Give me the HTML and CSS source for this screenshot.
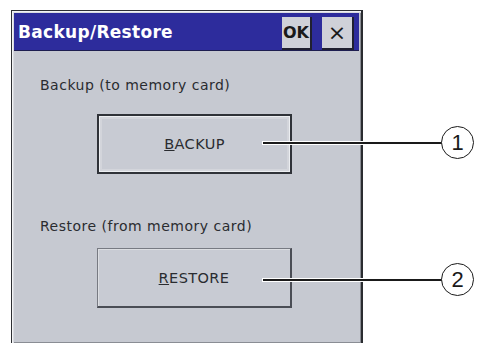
FILE: index.html
```html
<!DOCTYPE html>
<html>
<head>
<meta charset="utf-8">
<link rel="stylesheet" href="styles.css">
</head>
<body>
<div class="stage">
  <div class="window">
    <div class="titlebar">
      <span class="title">Backup/Restore</span>
      <span class="tbtn ok">OK</span>
      <span class="tbtn close">×</span>
    </div>
    <div class="content">
      <div class="label">Backup (to memory card)</div>
      <div class="btn btn-default"><span><u>B</u>ACKUP</span></div>
      <div class="label label2">Restore (from memory card)</div>
      <div class="btn btn-plain"><span><u>R</u>ESTORE</span></div>
    </div>
  </div>
  <div class="callout c1"><div class="line"></div><div class="num">1</div></div>
  <div class="callout c2"><div class="line"></div><div class="num">2</div></div>
</div>
</body>
</html>
```
FILE: styles.css
```css
html, body {
  margin: 0;
  padding: 0;
  background: #ffffff;
}
.stage {
  position: relative;
  width: 478px;
  height: 343px;
  overflow: hidden;
  background: #ffffff;
}
.window {
  margin-left: 11px;
  margin-top: 10px;
  width: 352px;
  height: 334px;
  box-sizing: border-box;
  border: 1px solid #2e3034;
  border-right: 2px solid #2a2c30;
  box-shadow: inset 1px 1px 0 #f2f3f5, inset 2px 2px 0 #d8dae0, inset -1px -1px 0 #8a8d94;
  background: #c6c9d1;
  padding: 2px 2px 0 2px;
  display: flex;
  flex-direction: column;
}
.titlebar {
  height: 38px;
  background: #2d2c9c;
  border-bottom: 1px solid #1d1d50;
  display: flex;
  align-items: center;
  padding-left: 4px;
  box-sizing: border-box;
}
.title {
  font-family: "DejaVu Sans", sans-serif;
  font-weight: bold;
  font-size: 17px;
  color: #ffffff;
  flex: 1;
  letter-spacing: 0.3px;
  padding-top: 1px;
}
.tbtn {
  display: flex;
  align-items: center;
  justify-content: center;
  height: 33px;
  background: #cfd1d8;
  color: #1a1a1a;
  font-family: "DejaVu Sans", sans-serif;
  box-sizing: border-box;
  border-bottom: 2px solid #202030;
  margin-top: 3px;
}
.ok {
  width: 30px;
  font-weight: bold;
  font-size: 16px;
  margin-right: 10px;
  border-right: 2px solid #202030;
}
.close {
  width: 32px;
  font-size: 22px;
  margin-right: 5px;
  border-right: 2px solid #202030;
}
.content {
  flex: 1;
  display: flex;
  flex-direction: column;
  padding: 25px 0 0 26px;
}
.label {
  font-family: "DejaVu Sans", sans-serif;
  font-size: 14px;
  line-height: 18px;
  color: #2a2c30;
  letter-spacing: 0.5px;
}
.label2 {
  margin-top: 43px;
}
.btn {
  margin-top: 20px;
  margin-left: 57px;
  width: 195px;
  height: 60px;
  box-sizing: border-box;
  display: flex;
  align-items: center;
  justify-content: center;
  font-family: "DejaVu Sans", sans-serif;
  font-size: 14.5px;
  color: #2a2c30;
  background: #c8cbd3;
}
.btn span {
  letter-spacing: 0.4px;
}
.btn-default {
  border: 2px solid #2f3238;
  box-shadow: inset 1px 1px 0 #eceef1, inset -1px -1px 0 #eceef1, inset 3px 3px 0 #d3d5db, inset -3px -3px 0 #d3d5db;
}
.btn-plain {
  margin-top: 13px;
  height: 60px;
  border-top: 1px solid #777a82;
  border-left: 1px solid #777a82;
  border-right: 2px solid #4a4d55;
  border-bottom: 2px solid #4a4d55;
  box-shadow: inset 1px 1px 0 #dcdee2;
}
.callout {
  position: absolute;
  left: 263px;
  display: flex;
  align-items: center;
}
.c1 { top: 126px; }
.c2 { top: 263px; }
.line {
  width: 179px;
  height: 2px;
  background: #1a1a1a;
  box-shadow: 0 0 0 1px #ffffff;
}
.num {
  width: 33px;
  height: 33px;
  box-sizing: border-box;
  border: 1.5px solid #1a1a1a;
  border-radius: 50%;
  background: #ffffff;
  display: flex;
  align-items: center;
  justify-content: center;
  font-family: "Liberation Sans", Arial, sans-serif;
  font-size: 22px;
  color: #1a1a1a;
  margin-left: -1px;
}
```
